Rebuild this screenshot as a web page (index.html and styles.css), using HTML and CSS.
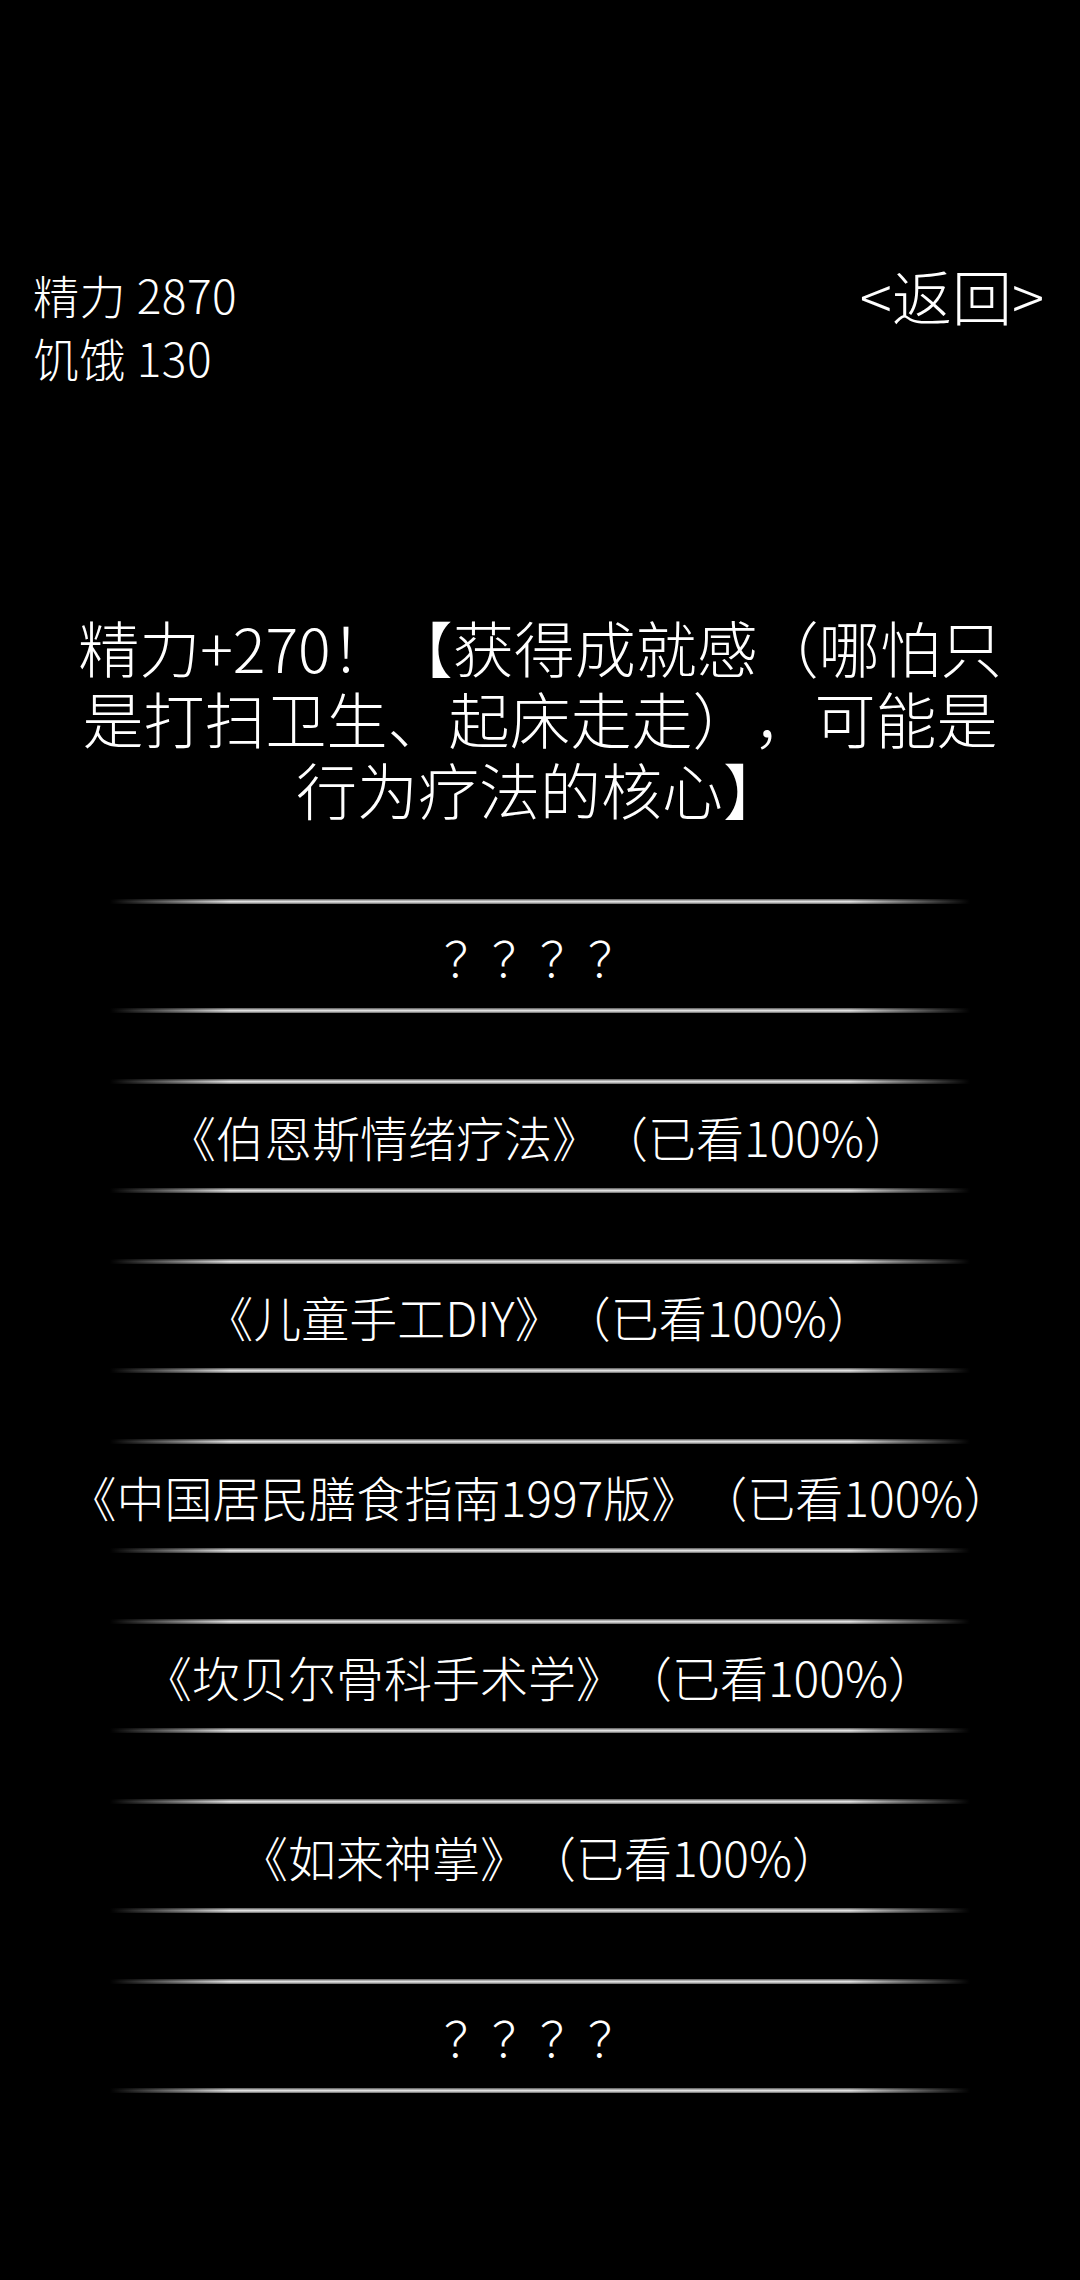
FILE: index.html
```html
<!DOCTYPE html>
<html lang="zh-CN">

<head>
    <meta charset="UTF-8">
    <meta name="viewport" content="width=device-width, initial-scale=1.0">
    <title>书架</title>
    <link rel="stylesheet" href="styles.css">
</head>

<body>
    <div class="container">
        <div class="stats">
            <div class="values">
                <div>精力 2870</div>
                <div>饥饿 130</div>
            </div>
            <div class="back">&lt;返回&gt;</div>
        </div>

        <p class="message">精力+270！【获得成就感（哪怕只是打扫卫生、起床走走），可能是行为疗法的核心】</p>

        <div class="books">
            <div class="book">？？？？</div>
            <div class="book">《伯恩斯情绪疗法》（已看100%）</div>
            <div class="book">《儿童手工DIY》（已看100%）</div>
            <div class="book">《中国居民膳食指南1997版》（已看100%）</div>
            <div class="book">《坎贝尔骨科手术学》（已看100%）</div>
            <div class="book">《如来神掌》（已看100%）</div>
            <div class="book">？？？？</div>
        </div>
    </div>
</body>

</html>
```

FILE: styles.css
```css
* {
    margin: 0;
    padding: 0;
    box-sizing: border-box;
}

body {
    background: #000;
    color: #fff;
    font-family: "Noto Sans CJK SC", "Noto Sans", sans-serif;
    font-weight: 300;
    text-spacing-trim: space-all;
}

.container {
    width: 1080px;
    min-height: 2280px;
    padding-top: 263px;
}

.stats {
    display: flex;
    justify-content: space-between;
    align-items: flex-start;
    padding: 0 36px 0 33px;
}

.values {
    font-size: 46px;
    line-height: 63px;
    letter-spacing: 0.5px;
}

.back {
    font-size: 60px;
    line-height: 63px;
}

.message {
    margin: 222px 65px 0;
    font-size: 61px;
    line-height: 71px;
    text-align: center;
}

.books {
    margin-top: 75px;
    display: flex;
    flex-direction: column;
    gap: 66px;
}

.book {
    display: flex;
    flex-direction: column;
    align-items: center;
    font-size: 48px;
    line-height: 104px;
    text-align: center;
}

.book::before,
.book::after {
    content: "";
    display: block;
    width: 860px;
    height: 5px;
    background:
        linear-gradient(to right, #000 0%, rgba(0, 0, 0, 0) 14%, rgba(0, 0, 0, 0) 86%, #000 100%),
        linear-gradient(to bottom, #555 0%, #d8d8d8 45%, #e8e8e8 55%, #666 100%);
}
```
